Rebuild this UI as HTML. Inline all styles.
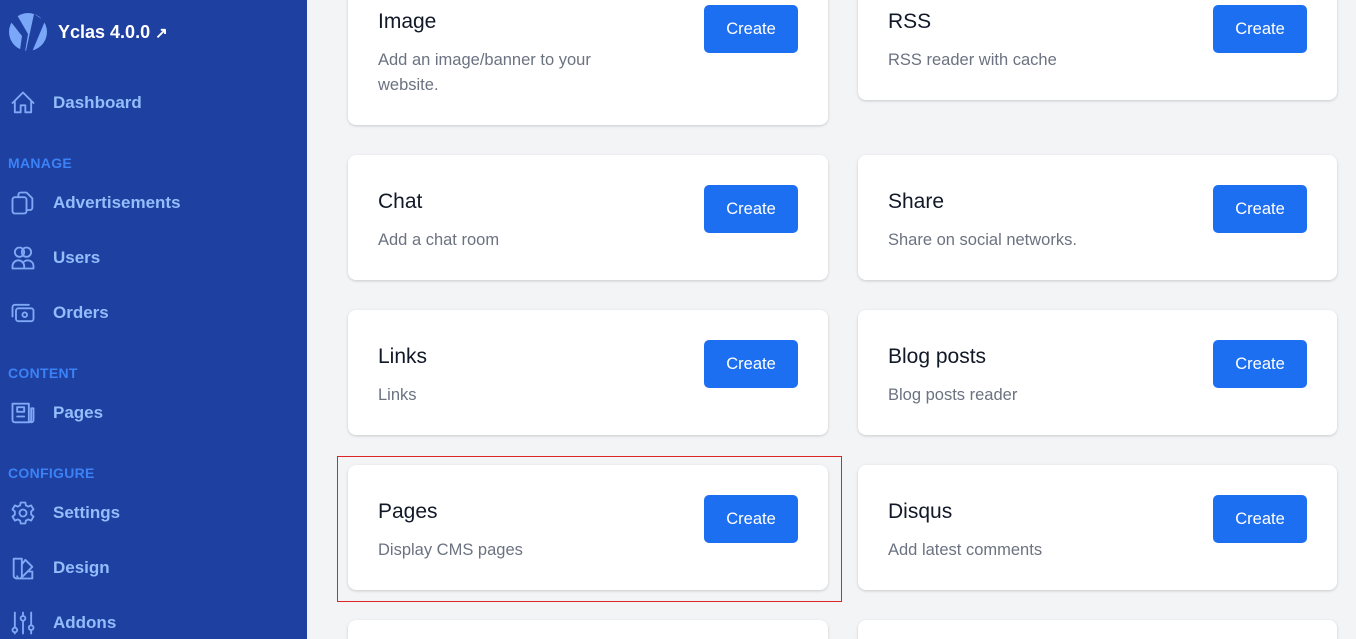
<!DOCTYPE html><html style="width:1356px;height:639px;overflow:hidden"><head><style>
*{box-sizing:border-box;margin:0;padding:0}
body{width:1356px;height:639px;overflow:hidden;background:#f3f4f6;font-family:"Liberation Sans",sans-serif;position:relative}
.sb{position:absolute;left:0;top:0;width:307px;height:639px;background:#1e40a0}
.it{position:absolute;left:9px;display:flex;align-items:center;color:#93bdfb;font-size:17px;font-weight:bold}
.it svg{width:28px;height:28px;margin-right:16px;stroke:#7fa9f5;fill:none;stroke-width:1.6;stroke-linecap:round;stroke-linejoin:round}
.h{position:absolute;left:8px;color:#3b82f6;font-size:14px;font-weight:bold;letter-spacing:.3px}
.card{position:absolute;background:#fff;border-radius:8px;box-shadow:0 1px 3px rgba(0,0,0,.12),0 1px 2px rgba(0,0,0,.06);width:480px;height:125px}
.card h3{position:absolute;left:30px;top:35px;font-size:21px;font-weight:normal;color:#111827}
.card p{position:absolute;left:30px;top:73px;font-size:16.5px;color:#6b7280;line-height:25px;width:270px}
.btn{position:absolute;right:30px;top:30px;width:94px;height:48px;background:#1d6ff2;color:#fff;border-radius:5px;font-size:16.5px;display:flex;align-items:center;justify-content:center}
</style></head><body>
<div class="sb">
<svg style="position:absolute;left:8px;top:12px" width="40" height="40" viewBox="0 0 40 40"><circle cx="20" cy="20" r="19" fill="#7aa7f7"/><path d="M9 3 L20 22 L17 40 L12 38 L14 24 L3 10Z M26 2 L37 9 L24 40 L18 39Z" fill="#1e40a0"/></svg>
<div style="position:absolute;left:58px;top:22px;color:#fff;font-size:18px;font-weight:bold">Yclas 4.0.0 <span style="font-size:15px">↗</span></div>
<div class="it" style="top:89px"><svg viewBox="0 0 24 24"><path d="M3 12 12 3l9 9M5 10v10h5v-6h4v6h5V10"/></svg>Dashboard</div>
<div class="h" style="top:155px">MANAGE</div>
<div class="it" style="top:189px"><svg viewBox="0 0 24 24"><rect x="3" y="7" width="12" height="14" rx="2"/><path d="M8 7V5a2 2 0 0 1 2-2h5l5 5v8a2 2 0 0 1-2 2h-3"/></svg>Advertisements</div>
<div class="it" style="top:244px"><svg viewBox="0 0 24 24"><circle cx="9" cy="7" r="4"/><circle cx="15" cy="7" r="4"/><path d="M3 21v-2a5 5 0 0 1 10 0v2H3zm8 0h10v-2a5 5 0 0 0-8-4"/></svg>Users</div>
<div class="it" style="top:299px"><svg viewBox="0 0 24 24"><rect x="6" y="8" width="15" height="11" rx="2"/><path d="M3 15V7a2 2 0 0 1 2-2h12"/><circle cx="13.5" cy="13.5" r="2"/></svg>Orders</div>
<div class="h" style="top:365px">CONTENT</div>
<div class="it" style="top:399px"><svg viewBox="0 0 24 24"><path d="M17 20H5a2 2 0 0 1-2-2V4h14v16zm0 0a2 2 0 0 0 2-2V8h2v10a2 2 0 0 1-2 2M7 7h6v4H7zM7 15h6"/></svg>Pages</div>
<div class="h" style="top:465px">CONFIGURE</div>
<div class="it" style="top:499px"><svg viewBox="0 0 24 24"><path d="M10 3h4l.5 2.5 2 1 2.5-1 2 3.5-2 1.6v2.8l2 1.6-2 3.5-2.5-1-2 1L14 21h-4l-.5-2.5-2-1-2.5 1-2-3.5 2-1.6v-2.8l-2-1.6 2-3.5 2.5 1 2-1z"/><circle cx="12" cy="12" r="3"/></svg>Settings</div>
<div class="it" style="top:554px"><svg viewBox="0 0 24 24"><path d="M4 4h7v15a2 2 0 0 1-4 0 M4 4v15a3 3 0 0 0 3 2h13v-6h-4M11 9l3-4 6 6-9 9"/></svg>Design</div>
<div class="it" style="top:609px"><svg viewBox="0 0 24 24"><path d="M5 3v13M5 20v1M12 3v3M12 10v11M19 3v11M19 18v3"/><circle cx="5" cy="18" r="2"/><circle cx="12" cy="8" r="2"/><circle cx="19" cy="16" r="2"/></svg>Addons</div>
</div>
<div class="card" style="left:348px;top:-25px;height:150px"><h3>Image</h3><p>Add an image/banner to your website.</p><div class="btn">Create</div></div>
<div class="card" style="left:858px;top:-25px;width:479px"><h3>RSS</h3><p>RSS reader with cache</p><div class="btn">Create</div></div>
<div class="card" style="left:348px;top:155px"><h3>Chat</h3><p>Add a chat room</p><div class="btn">Create</div></div>
<div class="card" style="left:858px;top:155px;width:479px"><h3>Share</h3><p>Share on social networks.</p><div class="btn">Create</div></div>
<div class="card" style="left:348px;top:310px"><h3>Links</h3><p>Links</p><div class="btn">Create</div></div>
<div class="card" style="left:858px;top:310px;width:479px"><h3>Blog posts</h3><p>Blog posts reader</p><div class="btn">Create</div></div>
<div class="card" style="left:348px;top:465px"><h3>Pages</h3><p>Display CMS pages</p><div class="btn">Create</div></div>
<div class="card" style="left:858px;top:465px;width:479px"><h3>Disqus</h3><p>Add latest comments</p><div class="btn">Create</div></div>
<div class="card" style="left:348px;top:620px;height:19px;border-radius:8px 8px 0 0"></div>
<div class="card" style="left:858px;top:620px;width:479px;height:19px;border-radius:8px 8px 0 0"></div>
<div style="position:absolute;left:337px;top:456px;width:505px;height:146px;border:1px solid #dc2626"></div>
</body></html>
